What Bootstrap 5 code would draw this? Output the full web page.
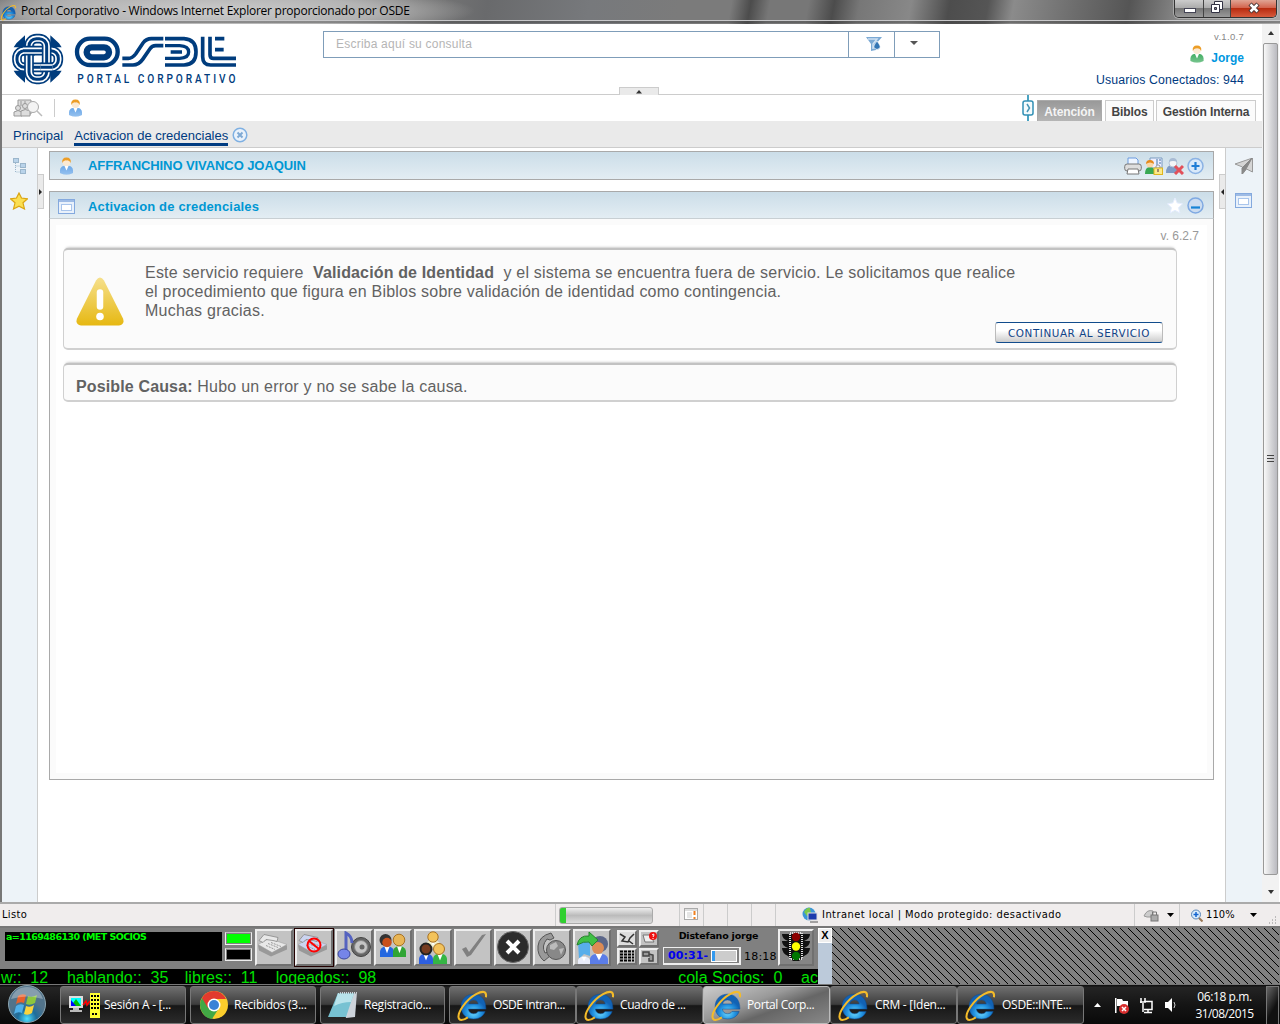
<!DOCTYPE html>
<html lang="es">
<head>
<meta charset="utf-8">
<title>Portal Corporativo</title>
<link rel="stylesheet" href="https://cdn.jsdelivr.net/npm/bootstrap@5.3.0/dist/css/bootstrap.min.css">
<style>
body{width:1280px;height:1024px;overflow:hidden;font-family:"Liberation Sans",Arial,sans-serif;font-size:13px;line-height:16px;color:#333;background:#fff}
svg{display:block;flex:none}
.segoe{font-family:"Open Sans","Noto Sans",sans-serif}
.tahoma{font-family:"DejaVu Sans Condensed","DejaVu Sans",sans-serif;font-stretch:condensed}
.nw{white-space:nowrap}
.titlebar{height:24px;color:#000;font-size:12px;background:linear-gradient(180deg,#c8c8ca 0 1px,#4446 1px 3px,transparent 3px) 0 20px/100% 4px no-repeat,radial-gradient(ellipse 260px 26px at 215px 11px,#ccc 0,#b4b4b4 60%,transparent),linear-gradient(100deg,#777 0,#aaa 6%,#999 24%,#777 33%,#696a6c 38%,#77797c 46%,#7b7b7b 53%,#7b7b7b 57%,#4c4c4c 58.5%,#777 60%,#777 63%,#4c4c4c 65%,#777 67%,#888 71%,#4d4d4d 74%,#555 77%,#8b8b8b 79%,#6c6c6c 84%,#555 88%,#888 92%,#aaa)}
.titlebar .ttl{letter-spacing:-.25px;height:22px;line-height:21px}
.winbtns{height:18px;width:103px;margin-right:3px;border:1px solid #333;border-top:0;border-radius:0 0 5px 5px;box-shadow:0 0 0 1px #ccc8;overflow:hidden}
.winbtns>div{background:linear-gradient(#ccc,#aaa 48%,#777 50%,#999);border-right:1px solid #444}
.winbtns .cls{background:linear-gradient(#e0a494,#d3644e 45%,#b82c10 50%,#d65a3c);border:0}
.browser{height:878px;border-left:2px solid #777}
.page{width:1260px;flex:none}
.head{height:71px;border-bottom:1px solid #ccc;position:relative}
.search{position:absolute;left:321px;top:7px;width:617px;height:27px;border:1px solid #7f9db9;font-size:12px;color:#b5b5b5;letter-spacing:.22px}
.search>div+div{border-left:1px solid #7f9db9;width:46px}
.collapse-tab{position:absolute;left:617px;top:63px;width:40px;height:8px;background:#eaeaea;border:1px solid #ccc;border-bottom:0}
.userbox{position:absolute;right:18px;top:5px;text-align:right}
.tools{height:26px}
.areatab{border:1px solid #ccc;border-bottom:0;background:#fbfbfb;font-weight:700;font-size:12px;color:#444;height:21px;line-height:22px;text-align:center;margin-top:5px;letter-spacing:-.1px}
.areatab.on{background:linear-gradient(#999,#b5b5b5);color:#f4f4f4;border-color:#aaa}
.crumbs{height:27px;background:#eaeaea;border-bottom:1px solid #ccc;color:#003a80}
.crumbs .cur{border-bottom:3px solid #003c82;height:18px;line-height:16px}
.side{background:#edf3f8}
.flap{width:6px;height:35px;background:#eaeaea;border:1px solid #ccc;margin-top:26px}
.bar{border:1px solid #a9a9a9;background:linear-gradient(#cbdde8,#e3edf3);color:#0097d3;font-weight:700;font-size:13px}
.pane{height:561px;border:1px solid #a9a9a9;border-top:0;box-shadow:inset 0 0 0 6px #fbfbfb}
.msg{border:2px solid #d0d0d0;border-width:1px 1px 2px 1px;border-top:2px solid #c2c2c2;border-radius:5px;background:#fbfbfb;color:#626262;font-size:16px;line-height:19px;width:1114px;box-shadow:0 -3px 3px -3px #999;letter-spacing:.22px}
.msg b{letter-spacing:.14px}
.contbtn{width:168px;height:21px;border:1px solid #bbb;border-top:1px solid #114c8c;border-bottom:1px solid #114c8c;border-radius:3px;background:linear-gradient(#fff 40%,#ccc);color:#114488;font:10.400px/21px "DejaVu Sans",sans-serif;letter-spacing:.55px;text-align:center;padding:0}
.scroll{width:17px;background:#f2f2f2}
.thumb{height:832px;width:15px;border:1px solid #999;border-radius:2px;background:linear-gradient(90deg,#f8f8f8,#d2d2d5 60%,#babac0)}
.status{height:24px;background:#f0eded;border-top:2px solid #aaa;color:#000;font-size:11px;letter-spacing:.1px}
.sep{border-left:1px solid #ccc}
.phone{height:58px;background:#808080;border-top:2px solid #777}
.display{width:217px;height:29px;background:#000;color:#0f0;font:bold 9.5px/10px "DejaVu Sans",sans-serif;letter-spacing:-.58px}
.led{width:27px;height:13px;border:1px solid #eee;border-top-color:#bbb;box-shadow:inset 0 0 0 1px #808080}
.pb{background:#c3c3c3;border:2px solid;border-color:#eee #707070 #707070 #eee;width:38px;height:37px}
.pb.act{outline:1px solid #200}
.tick{height:15px;background:#000;color:#00e000;font-size:16px;line-height:17px;width:818px;overflow:hidden}
.task{height:41px;background:linear-gradient(#777 0 1px,#111 1px 2px,#242424 3px,#151515 50%,#090909);color:#fff;font-size:12px;letter-spacing:-.26px}
.tb{height:38px;margin-top:2px;border:1px solid #777;border-radius:3px;background:linear-gradient(#6e6e6e,#3d3d3d 48%,#171717 52%,#2b2b2b);overflow:hidden}
.tb.on{background:linear-gradient(160deg,#ccc,#999 40%,#666 60%,#888);border-color:#bbb}
</style>
<script src="https://cdn.jsdelivr.net/npm/bootstrap@5.3.0/dist/js/bootstrap.bundle.min.js"></script>
</head>
<body>
<svg width="0" height="0" class="position-absolute">
<defs>
<linearGradient id="gw" x2="0" y2="1"><stop stop-color="#f6e08c"/><stop offset="1" stop-color="#e6b812"/></linearGradient>
<radialGradient id="gb" cy=".75"><stop stop-color="#6fdcff"/><stop offset=".6" stop-color="#2393e0"/><stop offset="1" stop-color="#1262b4"/></radialGradient>
<radialGradient id="orb" cy=".9"><stop stop-color="#4de0ff"/><stop offset=".5" stop-color="#1d6d9c"/><stop offset="1" stop-color="#52738a"/></radialGradient>
<linearGradient id="body" x2="0" y2="1"><stop stop-color="#fff" stop-opacity=".1"/><stop offset="1" stop-color="#fff" stop-opacity=".35"/></linearGradient>
<symbol id="ie" viewBox="0 0 32 32"><path d="M29 19.500H12c.5 3 2.200 4.500 5 4.500 2 0 3.400-.8 4.300-2.200h7C26.500 26.500 22.500 29 17 29 9.800 29 5 24.500 5 17.300S9.800 5 17 5s12 5 12 14.500zM12.200 14.500h9.400c-.4-2.500-2-3.900-4.600-3.900s-4.300 1.400-4.800 3.900z" fill="url(#gb)" stroke="#0b4f9c" stroke-width=".5"/><path d="M29 8c1-6-3-6.500-9.500-3C10 10 0 24 3 29c1.500 2 5 .8 8.500-1.500" fill="none" stroke="#f3bb2a" stroke-width="2"/></symbol>
<symbol id="person" viewBox="0 0 14 18"><path d="M.5 16v-3q1-4 4-4h5q3 0 4 4v3q-6.500 3-13 0z" fill="currentColor"/><path d="M.5 16v-3q1-4 4-4h5q3 0 4 4v3q-6.500 3-13 0z" fill="url(#body)"/><path d="M5 9l2 4.500L9 9z" fill="#fff"/><circle cx="7" cy="5.300" r="3.800" fill="#fbe9d2"/><path d="M2.800 6Q2 .5 7 .5T11.200 6Q10 3 7 3.400 4 3 2.800 6z" fill="#ec9d26"/></symbol>
<symbol id="win" viewBox="0 0 17 15"><rect x=".5" y=".5" width="16" height="14" fill="#e9f1fb" stroke="#84a9de"/><path d="M1 2h15" stroke="#84a9de" stroke-width="1.500"/><rect x="3.500" y="5.500" width="10" height="6" fill="#fff" stroke="#a9c5ec"/></symbol>
<symbol id="guy" viewBox="0 0 16 20" preserveAspectRatio="none"><path d="M0 20v-6q1-4 5-5h6q4 1 5 5v6z" fill="currentColor"/><path d="M5 9l3 7 3-7z" fill="#fff"/></symbol>
<symbol id="tel" viewBox="0 0 32 24"><path d="M1 12l11-6 18 6v4L14 23 2 17z" fill="#999"/><path d="M1 11l11-6 18 6-15 8z" fill="currentColor" stroke="#999" stroke-width=".5"/><path d="M2 7L7 1l14 3-1 4-4-1-7-1-3 3z" fill="currentColor" stroke="#888" stroke-width=".8"/><path d="M11 10l10 4M14 9l10 4M9 12l9 4" stroke="#999" stroke-dasharray="2 1"/></symbol>
<pattern id="diag" width="8" height="8" patternUnits="userSpaceOnUse"><rect width="8" height="8" fill="#808080"/><path d="M0 0h1v1H0zM1 1h1v1H1zM2 2h1v1H2zM3 3h1v1H3zM4 4h1v1H4zM5 5h1v1H5zM6 6h1v1H6zM7 7h1v1H7z" fill="#000" shape-rendering="crispEdges"/></pattern>
<clipPath id="over"><rect x="54" y="50" width="36" height="36"/><rect x="107" y="100" width="36" height="36"/></clipPath>
<g id="loopH" fill="none"><rect x="36" y="68" width="124" height="50" rx="22" stroke="#003c7d" stroke-width="29"/><rect x="36" y="68" width="124" height="50" rx="22" stroke="#fff" stroke-width="19"/><rect x="36" y="68" width="124" height="50" rx="22" stroke="#003c7d" stroke-width="9"/></g>
<g id="loopV" fill="none"><rect x="72" y="32" width="53" height="122" rx="22" stroke="#003c7d" stroke-width="29"/><rect x="72" y="32" width="53" height="122" rx="22" stroke="#fff" stroke-width="19"/><rect x="72" y="32" width="53" height="122" rx="22" stroke="#003c7d" stroke-width="9"/></g>
</defs></svg>

<div class="titlebar d-flex justify-content-between">
 <div class="d-flex"><svg width="17" height="17" class="mt-1 ms-0"><use href="#ie"/></svg><div class="ttl segoe nw ms-1">Portal Corporativo - Windows Internet Explorer proporcionado por OSDE</div></div>
 <div class="winbtns d-flex">
  <div style="width:29px"><svg width="28" height="17"><rect x="9.500" y="8.500" width="11" height="4" fill="#fff" stroke="#445"/></svg></div>
  <div style="width:27px"><svg width="26" height="17" fill="#fff" stroke="#334"><path d="M10.500 1.500h8v8h-8z"/><path d="M7.500 4.500h8v8h-8z"/><path d="M10.500 7.500h2v2h-2z" fill="#888"/></svg></div>
  <div class="cls flex-fill"><svg width="46" height="17"><path d="M19 4l8 8M27 4l-8 8" stroke="#433" stroke-width="4.500"/><path d="M19.500 4.500l7 7M26.500 4.500l-7 7" stroke="#fff" stroke-width="2.500"/></svg></div>
 </div>
</div>

<div class="browser d-flex">
 <div class="page d-flex flex-column">
  <div class="head">
   <svg width="240" height="62" viewBox="0 0 720 186" style="margin:4px 0 0 3px">
    <path d="M34 46l26-24v36H26zM162 46l-26-24v36h34zM34 140l26 24v-36H26zM162 140l-26 24v-36h34z" fill="#003c7d"/>
    <use href="#loopH"/><use href="#loopV"/><g clip-path="url(#over)"><use href="#loopH"/></g>
    <g fill="none" stroke="#003c7d">
     <rect x="216" y="32" width="122" height="79" rx="39" stroke-width="13"/>
     <rect x="245" y="58" width="67" height="30" rx="15" stroke-width="19"/>
     <g stroke-width="11"><path d="M352 91h18q12 0 22-13l22-33q10-13 25-13h36"/><path d="M352 111h32q17 0 29-17l22-32q6-9 17-9h23"/>
     <path d="M480 32h57q36 2 36 40t-36 39h-57"/><path d="M480 53h44q27 1 27 19t-27 19h-44M497 72h34" stroke-width="10"/>
     <path d="M593 26v60q0 25 24 25h76M615 26v54q0 11 11 11h67M630 32h28M630 65h26"/></g>
    </g>
    <text x="271" y="166" font-family="Roboto,sans-serif" font-size="38" font-weight="500" textLength="593" lengthAdjust="spacing" fill="#003c7d" transform="scale(.8 1)">PORTAL CORPORATIVO</text>
   </svg>
   <div class="search d-flex align-items-stretch">
    <div class="flex-fill ps-2 d-flex align-items-center" style="padding-bottom:2px"><span class="ps-1">Escriba aquí su consulta</span></div>
    <div class="d-flex align-items-center justify-content-center"><svg width="18" height="16" class="ms-1" style="margin-bottom:2px"><path d="M1 1h16l-6 7v6l-5 1V8z" fill="#7ba9d4"/><path d="M3 3h9l-4 5v5" stroke="#cfe1f2" stroke-width="1.500" fill="none"/><path d="M12 5q4 5 3 7-3 3-6 0-1-2 3-7z" fill="#3375b4" stroke="#fff" stroke-width=".7"/></svg></div>
    <div class="d-flex align-items-center justify-content-center" style="width:45px"><svg width="8" height="5" style="margin:0 7px 2px 0"><path d="M0 0h8L4 4z" fill="#555"/></svg></div>
   </div>
   <div class="collapse-tab"><svg width="38" height="7"><path d="M16 5.500l3-3.500 3 3.500z" fill="#333"/></svg></div>
   <div class="userbox nw">
    <div style="font-size:9.500px;color:#888;letter-spacing:.3px">v.1.0.7</div>
    <div class="d-flex justify-content-end fw-bold" style="font-size:12px;color:#0097e0;height:27px"><svg width="14" height="18" style="color:#2ea552;margin-right:7px"><use href="#person"/></svg><span style="padding-top:5px">Jorge</span></div>
    <div style="font-size:12.300px;color:#003a80;letter-spacing:.13px">Usuarios Conectados: 944</div>
   </div>
  </div>
  <div class="tools d-flex">
   <svg width="30" height="20" style="margin:3px 0 0 11px"><g fill="#ddd" stroke="#999"><path d="M5 2h13v14H5z"/><circle cx="5" cy="10" r="2.500"/><path d="M1 18v-4q4-3 8 0v4z"/><circle cx="12" cy="8" r="2.500"/><path d="M8 18v-5q4-3 9 0v5z"/><path d="M8 3v5M12 3v3" /></g><circle cx="20" cy="9" r="5.500" fill="#f4f4f4" stroke="#aaa"/><path d="M24 13l5 5" stroke="#bbb" stroke-width="1.500"/></svg>
   <div class="sep" style="height:18px;margin:4px 0 0 11px"></div>
   <svg width="15" height="18" style="color:#5c9fe6;margin:4px 0 0 13px"><use href="#person"/></svg>
   <div class="d-flex ms-auto" style="margin-right:6px">
    <svg width="14" height="26" style="margin-right:1px"><path d="M7 0v26" stroke="#4aa3c2" stroke-width="2"/><rect x="2" y="6" width="10" height="14" rx="2" fill="#f4fbfd" stroke="#3290b5" stroke-width="1.500"/><path d="M6 9l2.500 4L6 17" stroke="#4695b5" stroke-width="1.500" fill="none"/></svg>
    <div class="areatab on" style="width:65px;margin-left:1px">Atención</div>
    <div class="areatab" style="width:49px;margin-left:3px">Biblos</div>
    <div class="areatab" style="width:100px;margin-left:2px">Gestión Interna</div>
   </div>
  </div>
  <div class="crumbs d-flex nw">
   <div style="margin:7px 11px 0 11px;letter-spacing:.05px">Principal</div><div class="cur mt-1" style="padding-top:3px;height:21px">Activacion de credenciales</div>
   <svg width="16" height="16" style="margin:6px 0 0 4px"><circle cx="8" cy="8" r="6.800" fill="#eaf2fb" stroke="#7fb0e2" stroke-width="1.500"/><path d="M5.500 5.500l5 5M10.500 5.500l-5 5" stroke="#7fa9d4" stroke-width="2"/></svg>
  </div>
  <div class="d-flex flex-fill">
   <div class="side" style="width:36px;border-right:1px solid #ccc">
    <svg width="14" height="16" style="margin:10px 0 0 11px"><g fill="#b9d3ea" stroke="#9bb6cc"><path d="M2.500 5v9H8M2.500 8H8" fill="none" stroke-dasharray="1 1"/><rect x=".5" y=".5" width="5" height="4"/><rect x="7.500" y="5.500" width="5" height="4"/><rect x="7.500" y="11.500" width="5" height="4"/></g></svg>
    <svg width="18" height="18" style="margin:18px 0 0 8px"><path d="M9 1l2.500 5 6 .8-4.500 4L14.500 17 9 14.200 3.500 17 5 10.800.5 6.800l6-.8z" fill="#fbdf52" stroke="#dba514" stroke-width="1.200"/></svg>
   </div>
   <div class="flap border-start-0"><svg width="5" height="33"><path d="M1 14l3 3-3 3z" fill="#222"/></svg></div>
   <div style="width:1165px;margin:3px 5px 0 5px">
    <div class="bar d-flex align-items-center nw" style="height:29px;padding:0 9px"><svg width="15" height="18" style="color:#5c9fe6"><use href="#person"/></svg><span style="margin-left:14px;padding-top:1px;letter-spacing:-.08px">AFFRANCHINO VIVANCO JOAQUIN</span>
     <div class="d-flex ms-auto" style="gap:3px">
      <svg width="18" height="18"><path d="M4 8V1h8l2 2v5" fill="#eef5ff" stroke="#6b9be0"/><rect x=".7" y="7" width="16.600" height="7" rx="2.500" fill="#ddd" stroke="#777"/><path d="M4 12h10l1 5H3z" fill="#fff" stroke="#777"/></svg>
      <svg width="18" height="18"><path d="M5 1h12v10H5z" fill="#eef" stroke="#789bc0"/><path d="M12 2v6M14 3h2M14 6h2" stroke="#7a9dc4" stroke-width="1.500"/><path d="M0 17q0-7 5-7t5 7z" fill="#38a853"/><circle cx="5" cy="7" r="3.500" fill="#fbd7a5"/><path d="M1 7q0-4 4-4t4 4q-4-3-8 0z" fill="#e58a1c"/><path d="M11 11V9q2-2.500 4 0v2" stroke="#999" fill="none"/><rect x="9" y="11" width="8.500" height="6.500" fill="#fbe98a" stroke="#e0b51c"/><path d="M13 12v3" stroke="#865" stroke-width="1.500"/></svg>
      <svg width="18" height="18"><path d="M0 16q0-8 6-8t6 8z" fill="#7e9bc6"/><circle cx="7" cy="6" r="4" fill="#f3f5f8" stroke="#b5c4d6"/><path d="M3 5q0-4 4-4t4 4q-4-2-8 0z" fill="#a9bcd4"/><path d="M9 9l8 8M17 9l-8 8" stroke="#e2505a" stroke-width="3"/></svg>
      <svg width="17" height="18"><circle cx="8.500" cy="9" r="7.500" fill="#d9e9fa" stroke="#8bb2e4" stroke-width="1.500"/><path d="M4.500 9h8M8.500 5v8" stroke="#1f7dd6" stroke-width="2.200"/></svg>
     </div></div>
    <div class="bar d-flex align-items-center nw" style="height:28px;margin-top:11px;padding:2px 9px 0 8px;border-bottom-color:#c8cfd3"><svg width="17" height="15"><use href="#win"/></svg><span style="margin-left:13px;padding-top:1px;letter-spacing:.16px">Activacion de credenciales</span>
     <div class="d-flex ms-auto gap-1" style="margin-bottom:2px"><svg width="16" height="17"><path d="M8 1l2.200 5 5.300.8-4 4L13 16l-5-2.700L3 16l1.500-5.200-4-4L5.800 6z" fill="#fff" stroke="#e5edff"/></svg>
     <svg width="17" height="17"><circle cx="8.500" cy="8.500" r="7.500" fill="#cbdcf0" stroke="#7fa9e2" stroke-width="1.500"/><path d="M4 10.500h9" stroke="#1583d6" stroke-width="2.200"/></svg></div></div>
    <div class="pane">
     <div class="text-end" style="padding:9px 14px 0 0;font-size:12px;color:#999">v. 6.2.7</div>
     <div class="msg d-flex" style="height:102px;margin:4px 0 0 13px">
      <svg width="50" height="50" style="margin:27px 0 0 11px"><path d="M21 3.500q4-6 8 0l19 38q2 6-4 7H6q-6-1-4-7z" fill="url(#gw)"/><path d="M25 15.500v14" stroke="#fff" stroke-width="6.500" stroke-linecap="round"/><circle cx="25" cy="39.500" r="3.800" fill="#fff"/></svg>
      <div class="nw" style="margin:13px 0 0 20px;width:850px"><div>Este servicio requiere&nbsp; <b>Validación de Identidad</b>&nbsp; y el sistema se encuentra fuera de servicio. Le solicitamos que realice</div><div>el procedimiento que figura en Biblos sobre validación de identidad como contingencia.</div><div>Muchas gracias.</div></div>
      <button class="contbtn nw align-self-end" style="margin-bottom:5px">CONTINUAR AL SERVICIO</button>
     </div>
     <div class="msg nw" style="height:39px;margin:13px 0 0 13px;padding:12px 0 0 12px"><b>Posible Causa:</b> Hubo un error y no se sabe la causa.</div>
    </div>
   </div>
   <div class="flap border-end-0"><svg width="5" height="33"><path d="M4 14l-3 3 3 3z" fill="#222"/></svg></div>
   <div class="side flex-fill" style="border-left:1px solid #ccc">
    <svg width="18" height="17" style="margin:10px 0 0 9px"><path d="M17.500 0v14l-6-3-4 5V9L0 6z" fill="#d5d5d5" stroke="#999"/><path d="M17 0L7 10v6l4-5z" stroke="#888" fill="#888"/></svg>
    <svg width="17" height="15" style="margin:18px 0 0 9px"><use href="#win"/></svg>
   </div>
  </div>
 </div>
 <div class="scroll d-flex flex-column justify-content-between align-items-center">
  <svg width="15" height="17"><path d="M5 11l3-4 3 4z" fill="#333"/></svg>
  <div class="thumb d-flex align-items-center justify-content-center"><svg width="7" height="8"><path d="M0 .5h7M0 3.500h7M0 6.500h7" stroke="#444"/></svg></div>
  <svg width="15" height="26"><path d="M5 14h6l-3 4z" fill="#333"/></svg>
 </div>
</div>

<div class="status tahoma d-flex align-items-center nw">
 <div style="width:555px;padding-left:2px;letter-spacing:.35px">Listo</div>
 <div class="sep h-100 d-flex align-items-center" style="width:124px;padding-left:3px"><div style="width:94px;height:17px;border:1px solid #aaa;border-radius:3px;background:linear-gradient(90deg,#30d030 6px,transparent 6px),linear-gradient(#eee,#bbb 50%,#ddd)"></div></div>
 <div class="sep h-100" style="width:24px;padding:4px 0 0 4px"><svg width="14" height="12"><rect x=".5" y=".5" width="13" height="11" fill="#fff" stroke="#aaa"/><path d="M1 2h12" stroke="#bbb"/><path d="M3 5h5M3 7h5M3 9h5" stroke="#ccc"/><path d="M10.500 3v4M10.500 9v2" stroke="#f08020" stroke-width="2"/></svg></div>
 <div class="sep h-100" style="width:24px"></div><div class="sep h-100" style="width:24px"></div><div class="sep h-100" style="width:24px"></div>
 <div class="sep h-100" style="width:24px"></div>
 <div class="d-flex align-items-center" style="width:335px;gap:3px;padding-left:3px"><svg width="17" height="16"><circle cx="7" cy="7" r="6.500" fill="#3b95d8"/><path d="M2 5q3-5 6-4l1 5-4 3z" fill="#7bc94a"/><rect x="6" y="6" width="9" height="7" fill="#1c3bad" stroke="#ddd"/><path d="M8 15h8" stroke="#555"/></svg><span style="letter-spacing:.46px">Intranet local | Modo protegido: desactivado</span></div>
 <div class="sep h-100 d-flex align-items-center" style="width:45px;padding-left:8px;gap:8px"><svg width="16" height="14"><path d="M1 8Q4 1 10 3v6H4z" fill="#ccc" stroke="#999"/><rect x="8" y="7" width="7" height="6" fill="#aaa" stroke="#777"/><path d="M9.500 7V4h4v3" stroke="#777" fill="none"/></svg><svg width="8" height="4"><path d="M0 0h7L3.500 4z"/></svg></div>
 <div class="sep h-100 d-flex align-items-center" style="padding-left:10px"><svg width="13" height="13"><circle cx="6" cy="5.500" r="4.500" fill="#d8ebfb" stroke="#5a86b8"/><path d="M3.500 5.500h5M6 3v5" stroke="#1464d0" stroke-width="1.500"/><path d="M9 9l3.500 3.500" stroke="#975" stroke-width="2"/></svg><span style="width:44px;margin-left:3px">110%</span><svg width="8" height="4"><path d="M0 0h7L3.500 4z"/></svg><svg width="10" height="10" class="ms-2" style="margin-top:10px"><path d="M3 8h1M6 8h1M9 8h1M6 5h1M9 5h1M9 2h1" stroke="#aaa" stroke-width="1.500"/></svg></div>
</div>

<div class="phone d-flex">
 <div class="d-flex flex-column" style="width:818px">
  <div class="d-flex" style="height:41px;padding:1px 0 0 5px">
   <div class="display nw" style="margin-top:3px"><span style="padding-left:1px">a=1169486130 (MET SOCIOS</span></div>
   <div class="d-flex flex-column" style="gap:3px;margin:3px 3px 0 3px"><div class="led" style="background:#0f0"></div><div class="led" style="background:#000"></div></div>
   <div class="d-flex" style="gap:1.750px">
    <div class="pb"><svg width="33" height="30" style="color:#e8e8e8"><use href="#tel" y="1" width="32" height="27"/></svg></div>
    <div class="pb act"><svg width="33" height="30" style="color:#ccd4f0"><use href="#tel" y="1" width="32" height="27"/><circle cx="17" cy="14" r="6.500" fill="none" stroke="#f00" stroke-width="2"/><path d="M12 10l10 8" stroke="#f00" stroke-width="2"/></svg></div>
    <div class="pb"><svg width="34" height="32"><path d="M16 12l8-6v20l-8-6z" fill="#edc25b"/><circle cx="24" cy="16" r="9.500" fill="#666" stroke="#444"/><circle cx="24" cy="16" r="6.500" fill="#c5c5c5" stroke="#888"/><circle cx="25" cy="16" r="2.500" fill="#666"/><path d="M9 24V2q6 3 6 10" fill="none" stroke="#5563c0" stroke-width="3"/><ellipse cx="7" cy="23" rx="6" ry="5" fill="#7585e8" stroke="#3a479d"/></svg></div>
    <div class="pb"><svg width="34" height="32"><use href="#guy" x="4" y="7" width="14" height="19" color="#2468e0"/><use href="#guy" x="17" y="7" width="13" height="19" color="#30a535"/><circle cx="9.500" cy="9" r="6" fill="#333"/><circle cx="11" cy="11.500" r="4.700" fill="#c8501c"/><circle cx="23" cy="9" r="5.800" fill="#e8b555" stroke="#a87325"/></svg></div>
    <div class="pb"><svg width="34" height="33"><use href="#guy" x="10" y="2" width="14" height="16" color="#f0eeca"/><circle cx="17" cy="6" r="5.200" fill="#f3c35b" stroke="#a87325"/><use href="#guy" x="3" y="15" width="14" height="18" color="#2d5fe0"/><use href="#guy" x="17" y="15" width="14" height="18" color="#35b545"/><circle cx="10" cy="18" r="5.500" fill="#753b20" stroke="#222" stroke-width="2"/><circle cx="23" cy="18" r="5.500" fill="#f3c35b" stroke="#a87325"/></svg></div>
    <div class="pb"><svg width="34" height="32"><path d="M6 18l4-2 3 5L26 4l4-1-15 21-4 2z" fill="#808080"/></svg></div>
    <div class="pb"><svg width="34" height="32"><circle cx="17" cy="16" r="15.500" fill="#2c2c2c" stroke="#666"/><path d="M11 10l12 12M23 10L11 22" stroke="#fff" stroke-width="4"/></svg></div>
    <div class="pb"><svg width="34" height="32"><path d="M3 15Q4 5 16 2l3 5-4 2-3-1Q6 15 10 22l3-1 2 4-6 5Q2 24 3 15z" fill="#999" stroke="#555"/><circle cx="21" cy="19" r="9.500" fill="#888" stroke="#555"/><path d="M15 14l6-3 2 4-4 4-4-1zM24 18l5-1-3 7z" fill="#bbb"/></svg></div>
    <div class="pb"><svg width="34" height="33"><path d="M3 11l12-1v15l-6-2-5 5z" fill="#58aeea"/><use href="#guy" x="15" y="15" width="18" height="18" color="#5b7de8"/><use href="#guy" x="3" y="20" width="12" height="13" color="#e9edfa"/><circle cx="25" cy="13" r="8" fill="#5b6688"/><circle cx="23" cy="17" r="6" fill="#dc8b55"/><path d="M2 14Q4 4 14 5V1l9 8-6 6-3-4q-5-1-12 3z" fill="#3fc044" stroke="#27832c"/></svg></div>
   </div>
   <div class="d-flex flex-wrap align-content-start" style="width:44px;gap:1px 2px;margin:1px 2px 0 6px">
    <div class="pb" style="width:20px;height:17px"><svg width="16" height="13"><rect width="16" height="13" fill="#ddd"/><path d="M1 2l5 3-3 4 6 1 2-4 4-4M10 9l4 3" stroke="#333" fill="none" stroke-width="1.500"/></svg></div>
    <div class="pb" style="width:20px;height:17px"><svg width="16" height="13"><path d="M2 3h7l4 7H4z" fill="#eee" stroke="#777"/><circle cx="12" cy="4" r="4" fill="#e11"/><path d="M11 3q2-2 2 0l-1 2M12 6v1" stroke="#fff" fill="none"/></svg></div>
    <div class="pb" style="width:20px;height:17px"><svg width="16" height="13"><path d="M1 1.500h14M1 4.500h14M1 7.500h14M1 10.500h14" stroke="#000" stroke-width="2" stroke-dasharray="3 1"/></svg></div>
    <div class="pb" style="width:20px;height:17px"><svg width="16" height="13"><path d="M2 2h6v4H2zM8 4l4 1v6H8V8" stroke="#444" fill="#999" stroke-width="1.500"/></svg></div>
   </div>
   <div style="width:115px;color:#000"><div class="text-center nw" style="font:bold 9.500px/14px 'DejaVu Sans',sans-serif;height:18px;padding-right:4px;letter-spacing:-.2px">Distefano jorge</div>
    <div class="d-flex align-items-center nw" style="font:11px/17px 'DejaVu Sans',sans-serif"><div class="d-flex align-items-center" style="width:78px;height:18px;border:1px solid #eee;border-width:1px 2px 2px 1px;padding-left:4px"><b style="color:#00e;letter-spacing:.1px;width:43px;font-size:11px">00:31-</b><span style="width:26px;height:12px;background:linear-gradient(90deg,#39e 3px,#ccc 3px);border:1px solid #fff"></span></div><span style="margin-left:3px;letter-spacing:.2px">18:18</span></div></div>
   <div class="pb" style="width:36px;background:#858585"><svg width="32" height="33"><path d="M2 3h28q0 5-6 7h6q0 5-6 7h6q0 5-6 8l-5 5h-6l-5-5q-6-3-6-8h6q-6-2-6-7h6Q2 8 2 3z" fill="#111"/><path d="M10 2h12v26H10z" fill="none" stroke="#ddd" stroke-dasharray="1 1" stroke-width="2"/><circle cx="16" cy="6" r="4.200" fill="#8b0000"/><circle cx="16" cy="15.500" r="4.200" fill="#ff0"/><circle cx="16" cy="25" r="4.200" fill="#070"/></svg></div>
  </div>
  <div class="tick d-flex nw"><span style="width:67px;padding-left:1px">w::&nbsp; 12</span><span style="width:118px">hablando::&nbsp; 35</span><span style="width:91px">libres::&nbsp; 11</span><span style="width:403px">logeados::&nbsp; 98</span><span style="width:123px">cola Socios:&nbsp; 0</span><span>ac</span></div>
 </div>
 <div style="width:14px;background:#bccada"><div class="text-center fw-bold" style="height:15px;background:#eee;border:1px solid #fff;color:#000;font-size:11px;line-height:13px">X</div></div>
 <svg width="447" height="56"><rect width="447" height="56" fill="url(#diag)"/></svg>
</div>

<div class="task segoe d-flex nw">
 <svg width="40" height="40" style="margin:0 13px 0 7px"><circle cx="20" cy="20" r="18.500" fill="url(#orb)" stroke="#8ba4b0"/><path d="M11 12q4-3 8-1l-2 8q-4-2-8 1z" fill="#e8612c"/><path d="M21 12q4 2 9-1l-2 8q-5 3-9 1z" fill="#8cc63e"/><path d="M9 22q4-3 8-1l-2 8q-4-2-8 1z" fill="#4fb0ea"/><path d="M19 22q4 2 8-1l-2 8q-4 3-8 1z" fill="#fbd43c"/><path d="M4 15Q8 3 20 3t16 12q-16-5-32 0z" fill="#fff" opacity=".3"/></svg>
 <div class="tb d-flex align-items-center" style="width:126px;padding-left:7px;margin-right:4px"><svg width="33" height="27"><rect x="1" y="4" width="14" height="12" fill="#ddd"/><rect x="3" y="6" width="10" height="8" fill="#0ff"/><path d="M3 14l5-7 5 7z" fill="#0b0"/><path d="M3 14V8l5 6z" fill="#00f"/><path d="M5 16h6v2h3v2H2v-2h3z" fill="#bbb"/><path d="M15 13l3-4 1 4 3-4" stroke="#f00" fill="none" stroke-width="1.500"/><rect x="22" y="1" width="10" height="25" fill="#ff3"/><path d="M23 4h8M23 8h8M23 12h8M23 16h8M24 22h6" stroke="#000" stroke-width="2" stroke-dasharray="2 1"/></svg><span style="margin-left:3px">Sesión A - [...</span></div>
 <div class="tb d-flex align-items-center" style="width:126px;padding-left:9px;margin-right:4px"><svg width="28" height="28"><circle cx="14" cy="14" r="14" fill="#fbcd2c"/><path d="M14 14L2 7Q-2 14 2 21t10 7l7-11z" fill="#42a845"/><path d="M2 7l6 10 6-9h12Q22 0 14 0T2 7z" fill="#e23a2d"/><circle cx="14" cy="14" r="6.500" fill="#fff"/><circle cx="14" cy="14" r="5" fill="#3b82d6"/></svg><span style="margin-left:6px">Recibidos (3...</span></div>
 <div class="tb d-flex align-items-center" style="width:125px;padding-left:7px;margin-right:4px"><svg width="31" height="30"><path d="M12 2h17l-2 25-9 1z" fill="#cdd3da"/><path d="M10 3h16l-8 24H0z" fill="#77c2d2"/><path d="M10 3h16l-3 9q-9 0-17 4z" fill="#b8e3eb"/><path d="M11 2.500h17" stroke="#666" stroke-width="2" stroke-dasharray="1 1"/></svg><span style="margin-left:5px">Registracio...</span></div>
 <div class="tb d-flex align-items-center" style="width:127px;padding-left:6px"><svg width="33" height="33"><use href="#ie"/></svg><span style="margin-left:4px;letter-spacing:-.42px">OSDE Intran...</span></div>
 <div class="tb d-flex align-items-center" style="width:127px;padding-left:6px"><svg width="33" height="33"><use href="#ie"/></svg><span style="margin-left:4px;letter-spacing:-.4px">Cuadro de ...</span></div>
 <div class="tb on d-flex align-items-center" style="width:127px;padding-left:6px"><svg width="33" height="33"><use href="#ie"/></svg><span style="margin-left:4px;letter-spacing:-.4px">Portal Corp...</span></div>
 <div class="tb d-flex align-items-center" style="width:127px;padding-left:6px"><svg width="33" height="33"><use href="#ie"/></svg><span style="margin-left:5px">CRM - [Iden...</span></div>
 <div class="tb d-flex align-items-center" style="width:127px;padding-left:6px"><svg width="33" height="33"><use href="#ie"/></svg><span style="margin-left:5px">OSDE::INTE...</span></div>
 <svg width="100" height="41"><g fill="#fff"><path d="M10 23l3.500-4 3.500 4z"/><path d="M31 14h1.500v15H31zM33 15h5l1 2h5v7h-5l-1-2h-5z"/><circle cx="40" cy="25" r="5" fill="#d83030"/><path d="M38 23l4 4M42 23l-4 4" stroke="#fff" stroke-width="1.500"/><path d="M60 17.500h8v8H60M64 26v3M60 28.500h8M57 14v5M61 14v4M56 18h6M59 19v9" fill="none" stroke="#fff" stroke-width="1.500"/><path d="M81 18h3l4-4v14l-4-4h-3z"/><path d="M90 18q2 3 0 6" fill="none" stroke="#ccc"/></g></svg>
 <div class="text-center" style="width:82px;line-height:17px;padding:4px 1px 0 0;letter-spacing:-.4px"><div>06:18 p.m.</div><div style="letter-spacing:-.55px">31/08/2015</div></div>
 <div style="width:13px;height:39px;margin-top:2px;border:1px solid #777;background:linear-gradient(120deg,#666,#111 60%)"></div>
</div>
</body>
</html>
